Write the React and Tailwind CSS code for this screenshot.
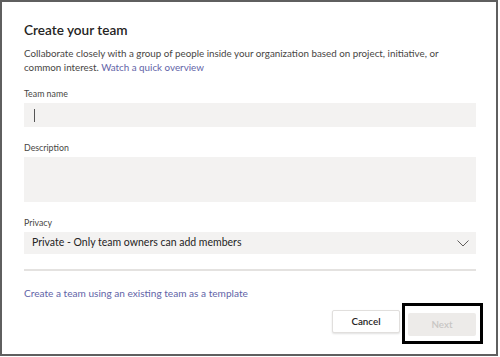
export default function App() {
  const font = { fontFamily: 'Lato, "Open Sans", sans-serif' };
  return (
    <div className="w-[500px] h-[357px] bg-white" style={font}>
      <div className="w-[498px] h-[356px] border-2 border-[#5f5f5f] bg-white pl-[22px] pr-[20px] pt-[18px]">
        <div className="h-[20px] leading-[20px] text-[13.6px] font-semibold text-[#252423]">Create your team</div>
        <p className="mt-[6px] text-[9.8px] leading-[14px] text-[#484644]">
          Collaborate closely with a group of people inside your organization based on project, initiative, or<br />common interest.{' '}
          <span className="text-[#6264a7]">Watch a quick overview</span>
        </p>
        <div className="mt-[13px] h-[14px] leading-[14px] text-[8.8px] text-[#484644]">Team name</div>
        <div className="mt-[2px] h-[24px] bg-[#f3f2f1] flex items-center pl-[10px]">
          <div className="w-px h-[13px] bg-[#555]"></div>
        </div>
        <div className="mt-[14px] h-[14px] leading-[14px] text-[8.8px] text-[#484644]">Description</div>
        <div className="mt-[2px] h-[45px] bg-[#f3f2f1]"></div>
        <div className="mt-[14px] h-[14px] leading-[14px] text-[8.8px] text-[#484644]">Privacy</div>
        <div className="mt-[2px] h-[22px] bg-[#f3f2f1] flex items-center justify-between pl-[8px] pr-[7px]">
          <span className="text-[10.5px] text-[#252423]">Private - Only team owners can add members</span>
          <svg width="12" height="7" viewBox="0 0 12 7" fill="none">
            <polyline points="0.5,0.5 6,6 11.5,0.5" stroke="#605e5c" strokeWidth="1" />
          </svg>
        </div>
        <div className="mt-[15px] h-[2px] bg-[#e4e2e0]"></div>
        <div className="mt-[15px] h-[14px] leading-[14px] text-[10.1px] text-[#6264a7]">Create a team using an existing team as a template</div>
        <div className="mt-[10px] flex justify-end gap-[8px]">
          <button className="w-[68px] h-[23px] bg-white border border-[#e1dfdd] rounded-[2px] shadow-[0_1px_2px_rgba(0,0,0,0.12)] text-[9.8px] font-semibold text-[#252423]">Cancel</button>
          <div className="relative">
            <button className="w-[68px] h-[23px] bg-[#edebe9] rounded-[2px] text-[9.8px] font-semibold text-[#c8c6c4]">Next</button>
            <div className="absolute left-[-6px] top-[-7px] w-[81px] h-[41px] border-[3px] border-black"></div>
          </div>
        </div>
      </div>
    </div>
  );
}
